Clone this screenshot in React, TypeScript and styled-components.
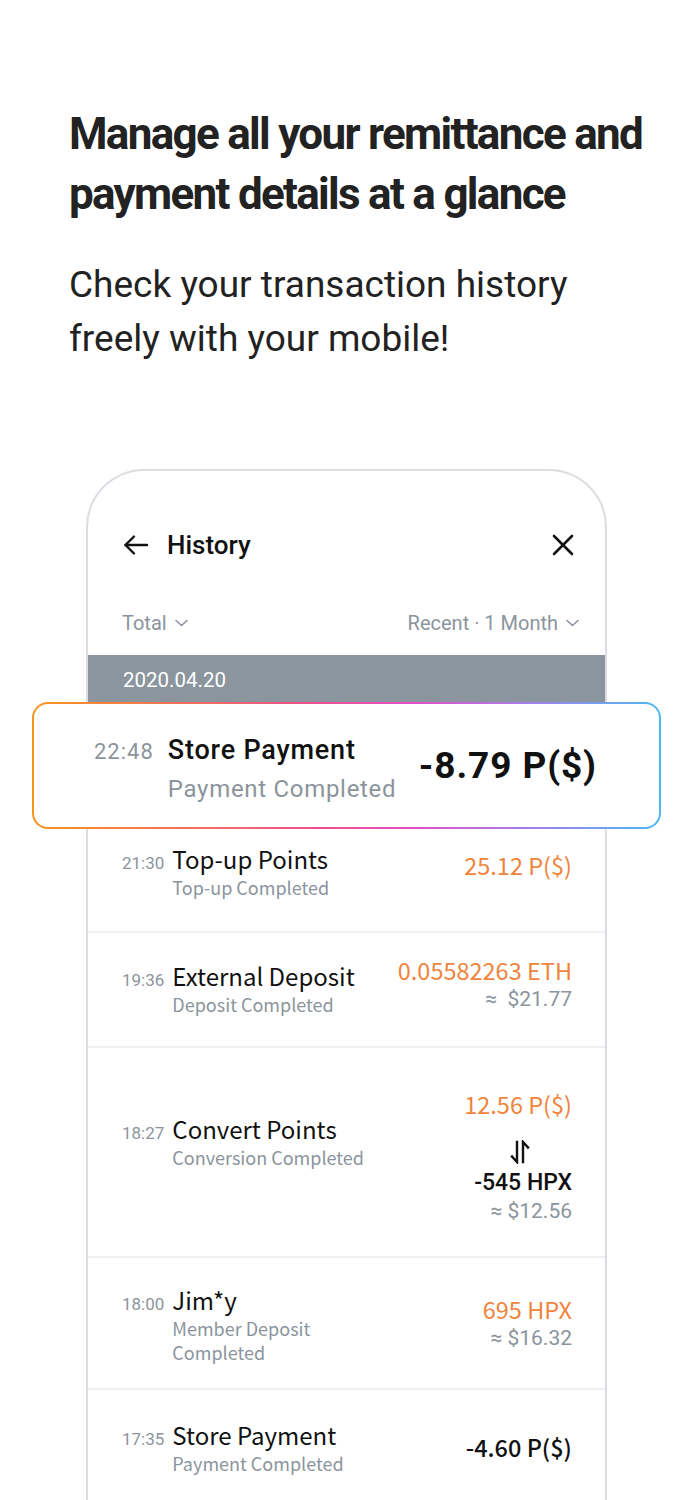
import React from 'react';
import styled, { createGlobalStyle } from 'styled-components';

const GlobalStyle = createGlobalStyle`
  html, body { margin: 0; padding: 0; background: #ffffff; }
  body { font-family: Roboto, "Noto Sans", sans-serif; -webkit-font-smoothing: antialiased; }
`;

const GRAY = '#8b949d';
const ORANGE = '#f0843c';
const CJK = '"Noto Sans CJK KR", "Noto Sans", sans-serif';

const Page = styled.div`
  height: 1500px;
  overflow: hidden;
  background: #fff;
  padding-top: 104px;
  box-sizing: border-box;
`;

const Intro = styled.section`
  padding: 0 20px 0 69px;
`;

const Headline = styled.h1`
  margin: 0;
  font-family: Roboto, sans-serif;
  font-weight: 700;
  font-size: 44px;
  line-height: 60px;
  letter-spacing: -1.7px;
  color: #222;
  white-space: nowrap;
`;

const Lead = styled.p`
  margin: 34px 0 0;
  font-family: Roboto, sans-serif;
  font-weight: 400;
  font-size: 37px;
  line-height: 54px;
  color: #222;
`;

const Phone = styled.div`
  position: relative;
  margin: 103px 0 0 86px;
  width: 521px;
  box-sizing: border-box;
  border: 2px solid #dcdde2;
  border-bottom: none;
  border-radius: 58px 58px 0 0;
  background: #fff;
`;

const Header = styled.div`
  display: flex;
  align-items: center;
  height: 74px;
  margin-top: 37px;
  padding: 0 31px 0 35px;
`;

const HeaderTitle = styled.div`
  margin-left: 18px;
  flex: 1;
  font-family: Roboto, sans-serif;
  font-weight: 500;
  font-size: 26px;
  color: #111;
`;

const FilterRow = styled.div`
  display: flex;
  align-items: center;
  justify-content: space-between;
  height: 73px;
  box-sizing: border-box;
  padding: 8px 26px 0 34px;
`;

const Filter = styled.div`
  display: flex;
  align-items: center;
  gap: 8px;
  font-family: Roboto, sans-serif;
  font-size: 20px;
  line-height: 24px;
  color: ${GRAY};
`;

const DateBar = styled.div`
  display: flex;
  align-items: center;
  height: 50px;
  padding-left: 35px;
  background: #8b959e;
  color: #fff;
  font-family: Roboto, sans-serif;
  font-size: 20.5px;
  line-height: 24px;
`;

const Row = styled.div<{ $h: number; $masked?: boolean }>`
  display: flex;
  align-items: center;
  justify-content: space-between;
  height: ${(p) => p.$h}px;
  box-sizing: border-box;
  padding: 0 33px 0 34px;
  border-bottom: 2px solid #eff0f2;
  & > * {
    visibility: ${(p) => (p.$masked ? 'hidden' : 'visible')};
  }
`;

/* $shift: vertical nudge of a centred column (negative = up) */
const shiftMargin = (d = 0) => `${d > 0 ? d * 2 : 0}px 0 ${d < 0 ? -d * 2 : 0}px`;

const RowLeft = styled.div<{ $shift?: number }>`
  display: flex;
  align-items: baseline;
  gap: 8px;
  margin: ${(p) => shiftMargin(p.$shift)};
`;

const Time = styled.span`
  font-family: Roboto, sans-serif;
  font-size: 17px;
  color: ${GRAY};
`;

const TextBlock = styled.div`
  display: flex;
  flex-direction: column;
`;

const Title = styled.span`
  font-family: ${CJK};
  font-size: 24px;
  line-height: 33px;
  color: #111;
`;

const Sub = styled.span`
  max-width: 200px;
  font-family: ${CJK};
  font-size: 18px;
  line-height: 24px;
  color: ${GRAY};
`;

const RowRight = styled.div<{ $shift?: number }>`
  display: flex;
  flex-direction: column;
  align-items: flex-end;
  text-align: right;
  margin: ${(p) => shiftMargin(p.$shift)};
`;

const Amount = styled.span<{ $orange?: boolean }>`
  font-family: ${CJK};
  font-size: 23.5px;
  line-height: 30px;
  font-weight: ${(p) => (p.$orange ? 400 : 500)};
  color: ${(p) => (p.$orange ? ORANGE : '#111')};
`;

const Approx = styled.span`
  font-family: Roboto, sans-serif;
  font-size: 21px;
  line-height: 28px;
  color: ${GRAY};
  white-space: pre;
`;

const Converted = styled.span`
  font-family: Roboto, sans-serif;
  font-weight: 500;
  font-size: 23px;
  line-height: 28px;
  color: #111;
`;

const SwapIcon = styled.svg`
  display: block;
  margin: 21px 41px 5px 0;
`;

const Card = styled.div`
  position: absolute;
  left: -56px;
  top: 231px;
  width: 629px;
  height: 127px;
  box-sizing: border-box;
  border: 2px solid transparent;
  border-radius: 16px;
  background:
    linear-gradient(#fff, #fff) padding-box,
    linear-gradient(90deg, #f7951d 0%, #f4676a 30%, #ef4f8e 45%, #e34fc6 60%, #a77de6 78%, #4cb9f4 100%) border-box;
  display: flex;
  align-items: center;
  justify-content: space-between;
  padding: 0 62px 0 60px;
`;

const CardLeft = styled.div`
  display: flex;
  align-items: baseline;
  gap: 14px;
  margin-top: 10px;
`;

const CardTime = styled.span`
  font-family: Roboto, sans-serif;
  font-size: 22px;
  letter-spacing: 1px;
  color: ${GRAY};
`;

const CardTitle = styled.span`
  font-family: Roboto, sans-serif;
  font-weight: 500;
  font-size: 27px;
  line-height: 36px;
  letter-spacing: 0.8px;
  color: #111;
`;

const CardSub = styled.span`
  font-family: Roboto, sans-serif;
  font-weight: 400;
  font-size: 24px;
  line-height: 42px;
  letter-spacing: 0.7px;
  color: ${GRAY};
`;

const CardAmount = styled.span`
  font-family: Roboto, sans-serif;
  font-weight: 700;
  font-size: 37px;
  letter-spacing: 0.9px;
  color: #111;
`;

const BackIcon = () => (
  <svg width="26" height="22" viewBox="0 0 26 22" fill="none" stroke="#111" strokeWidth="2.4" strokeLinecap="round" strokeLinejoin="round">
    <path d="M24 11H2.5" />
    <path d="M11 2.5L2.5 11L11 19.5" />
  </svg>
);

const CloseIcon = () => (
  <svg width="22" height="22" viewBox="0 0 22 22" fill="none" stroke="#111" strokeWidth="2.6" strokeLinecap="round">
    <path d="M2 2L20 20" />
    <path d="M20 2L2 20" />
  </svg>
);

const Chevron = () => (
  <svg width="13" height="8" viewBox="0 0 13 8" fill="none" stroke={GRAY} strokeWidth="1.6" strokeLinecap="round" strokeLinejoin="round">
    <path d="M1 1.5L6.5 6.5L12 1.5" />
  </svg>
);

const Swap = () => (
  <SwapIcon width="22" height="24" viewBox="0 0 22 24" fill="none" stroke="#111" strokeWidth="2.4" strokeLinecap="square" strokeLinejoin="miter">
    <path d="M8 2V22L3 16.5" />
    <path d="M14 22V2L19 7.5" />
  </SwapIcon>
);

type Tx = {
  h: number;
  masked?: boolean;
  left?: number;
  right?: number;
  time: string;
  title: string;
  sub: string;
  amounts: React.ReactNode;
};

const txs: Tx[] = [
  { h: 105, masked: true, time: '22:48', title: 'Store Payment', sub: 'Payment Completed', amounts: <Amount>-8.79 P($)</Amount> },
  { h: 123, right: -6, time: '21:30', title: 'Top-up Points', sub: 'Top-up Completed', amounts: <Amount $orange>25.12 P($)</Amount> },
  {
    h: 115,
    left: -2,
    right: -6,
    time: '19:36',
    title: 'External Deposit',
    sub: 'Deposit Completed',
    amounts: (
      <>
        <Amount $orange>0.05582263 ETH</Amount>
        <Approx>{'≈  $21.77'}</Approx>
      </>
    ),
  },
  {
    h: 210,
    left: -12,
    right: 5,
    time: '18:27',
    title: 'Convert Points',
    sub: 'Conversion Completed',
    amounts: (
      <>
        <Amount $orange>12.56 P($)</Amount>
        <Swap />
        <Converted>-545 HPX</Converted>
        <Approx>≈ $12.56</Approx>
      </>
    ),
  },
  {
    h: 132,
    time: '18:00',
    title: 'Jim*y',
    sub: 'Member Deposit Completed',
    amounts: (
      <>
        <Amount $orange>695 HPX</Amount>
        <Approx>≈ $16.32</Approx>
      </>
    ),
  },
  { h: 115, time: '17:35', title: 'Store Payment', sub: 'Payment Completed', amounts: <Amount>-4.60 P($)</Amount> },
];

export default function App() {
  return (
    <Page>
      <GlobalStyle />
      <Intro>
        <Headline>
          Manage all your remittance and
          <br />
          payment details at a glance
        </Headline>
        <Lead>
          Check your transaction history
          <br />
          freely with your mobile!
        </Lead>
      </Intro>
      <Phone>
        <Header>
          <BackIcon />
          <HeaderTitle>History</HeaderTitle>
          <CloseIcon />
        </Header>
        <FilterRow>
          <Filter>
            Total <Chevron />
          </Filter>
          <Filter>
            Recent · 1 Month <Chevron />
          </Filter>
        </FilterRow>
        <DateBar>2020.04.20</DateBar>
        {txs.map((t, i) => (
          <Row key={i} $h={t.h} $masked={t.masked}>
            <RowLeft $shift={t.left}>
              <Time>{t.time}</Time>
              <TextBlock>
                <Title>{t.title}</Title>
                <Sub>{t.sub}</Sub>
              </TextBlock>
            </RowLeft>
            <RowRight $shift={t.right}>{t.amounts}</RowRight>
          </Row>
        ))}
        <Card>
          <CardLeft>
            <CardTime>22:48</CardTime>
            <TextBlock>
              <CardTitle>Store Payment</CardTitle>
              <CardSub>Payment Completed</CardSub>
            </TextBlock>
          </CardLeft>
          <CardAmount>-8.79 P($)</CardAmount>
        </Card>
      </Phone>
    </Page>
  );
}
